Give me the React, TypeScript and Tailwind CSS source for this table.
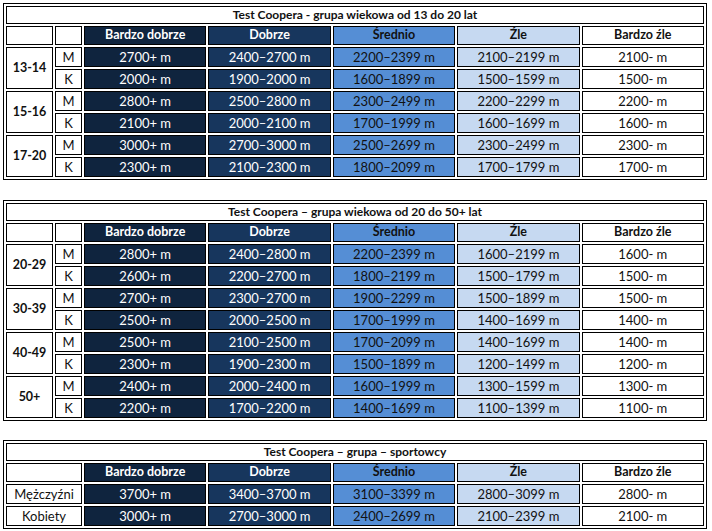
import React from "react";

type Row = { age?: string; sex: string; vals: string[] };

const colCls = [
  "bg-[#0f243e] text-white",
  "bg-[#17365d] text-white",
  "bg-[#558ed5] text-[#111]",
  "bg-[#c6d9f1] text-[#111]",
  "bg-white text-[#111]",
];

const headers = ["Bardzo dobrze", "Dobrze", "Średnio", "Źle", "Bardzo źle"];

const cell = "border border-black flex items-center justify-center whitespace-nowrap";

function AgeTable({ title, rows, gridRows }: { title: string; rows: Row[]; gridRows: string }) {
  return (
    <div
      className={`ml-[3px] w-[704px] border border-black p-[2px] grid grid-cols-[47px_27px_repeat(5,1fr)] gap-[2px] ${gridRows}`}
    >
      <div className={`${cell} col-span-7 font-bold text-[12px]`}>{title}</div>
      <div className={cell}></div>
      <div className={cell}></div>
      {headers.map((h, i) => (
        <div key={h} className={`${cell} font-bold text-[12.5px] ${colCls[i]}`}>
          {h}
        </div>
      ))}
      {rows.map((r, ri) => (
        <React.Fragment key={ri}>
          {r.age && <div className={`${cell} row-span-2 font-bold text-[12.5px]`}>{r.age}</div>}
          <div className={cell}>{r.sex}</div>
          {r.vals.map((v, i) => (
            <div key={i} className={`${cell} ${colCls[i]}`}>
              {v}
            </div>
          ))}
        </React.Fragment>
      ))}
    </div>
  );
}

const t1: Row[] = [
  { age: "13-14", sex: "M", vals: ["2700+ m", "2400–2700 m", "2200–2399 m", "2100–2199 m", "2100- m"] },
  { sex: "K", vals: ["2000+ m", "1900–2000 m", "1600–1899 m", "1500–1599 m", "1500- m"] },
  { age: "15-16", sex: "M", vals: ["2800+ m", "2500–2800 m", "2300–2499 m", "2200–2299 m", "2200- m"] },
  { sex: "K", vals: ["2100+ m", "2000–2100 m", "1700–1999 m", "1600–1699 m", "1600- m"] },
  { age: "17-20", sex: "M", vals: ["3000+ m", "2700–3000 m", "2500–2699 m", "2300–2499 m", "2300- m"] },
  { sex: "K", vals: ["2300+ m", "2100–2300 m", "1800–2099 m", "1700–1799 m", "1700- m"] },
];

const t2: Row[] = [
  { age: "20-29", sex: "M", vals: ["2800+ m", "2400–2800 m", "2200–2399 m", "1600–2199 m", "1600- m"] },
  { sex: "K", vals: ["2600+ m", "2200–2700 m", "1800–2199 m", "1500–1799 m", "1500- m"] },
  { age: "30-39", sex: "M", vals: ["2700+ m", "2300–2700 m", "1900–2299 m", "1500–1899 m", "1500- m"] },
  { sex: "K", vals: ["2500+ m", "2000–2500 m", "1700–1999 m", "1400–1699 m", "1400- m"] },
  { age: "40-49", sex: "M", vals: ["2500+ m", "2100–2500 m", "1700–2099 m", "1400–1699 m", "1400- m"] },
  { sex: "K", vals: ["2300+ m", "1900–2300 m", "1500–1899 m", "1200–1499 m", "1200- m"] },
  { age: "50+", sex: "M", vals: ["2400+ m", "2000–2400 m", "1600–1999 m", "1300–1599 m", "1300- m"] },
  { sex: "K", vals: ["2200+ m", "1700–2200 m", "1400–1699 m", "1100–1399 m", "1100- m"] },
];

const t3 = [
  { name: "Mężczyźni", vals: ["3700+ m", "3400–3700 m", "3100–3399 m", "2800–3099 m", "2800- m"] },
  { name: "Kobiety", vals: ["3000+ m", "2700–3000 m", "2400–2699 m", "2100–2399 m", "2100- m"] },
];

export default function App() {
  return (
    <div
      className="w-[712px] h-[531px] bg-white text-[13px] leading-none text-[#111] pt-[3px]"
      style={{ fontFamily: "Lato, 'Noto Sans', sans-serif" }}
    >
      <AgeTable
        title="Test Coopera - grupa wiekowa od 13 do 20 lat"
        rows={t1}
        gridRows="grid-rows-[18px_19px_repeat(6,20px)]"
      />
      <div className="h-[20px]" />
      <AgeTable
        title="Test Coopera – grupa wiekowa od 20 do 50+ lat"
        rows={t2}
        gridRows="grid-rows-[18px_19px_repeat(8,20px)]"
      />
      <div className="h-[19px]" />
      <div className="ml-[3px] w-[704px] border border-black p-[2px] grid grid-cols-[76px_repeat(5,1fr)] grid-rows-[18px_19px_repeat(2,20px)] gap-[2px]">
        <div className={`${cell} col-span-6 font-bold text-[12px]`}>Test Coopera – grupa – sportowcy</div>
        <div className={cell}></div>
        {headers.map((h, i) => (
          <div key={h} className={`${cell} font-bold text-[12.5px] ${colCls[i]}`}>
            {h}
          </div>
        ))}
        {t3.map((r) => (
          <React.Fragment key={r.name}>
            <div className={cell}>{r.name}</div>
            {r.vals.map((v, i) => (
              <div key={i} className={`${cell} ${colCls[i]}`}>
                {v}
              </div>
            ))}
          </React.Fragment>
        ))}
      </div>
    </div>
  );
}
